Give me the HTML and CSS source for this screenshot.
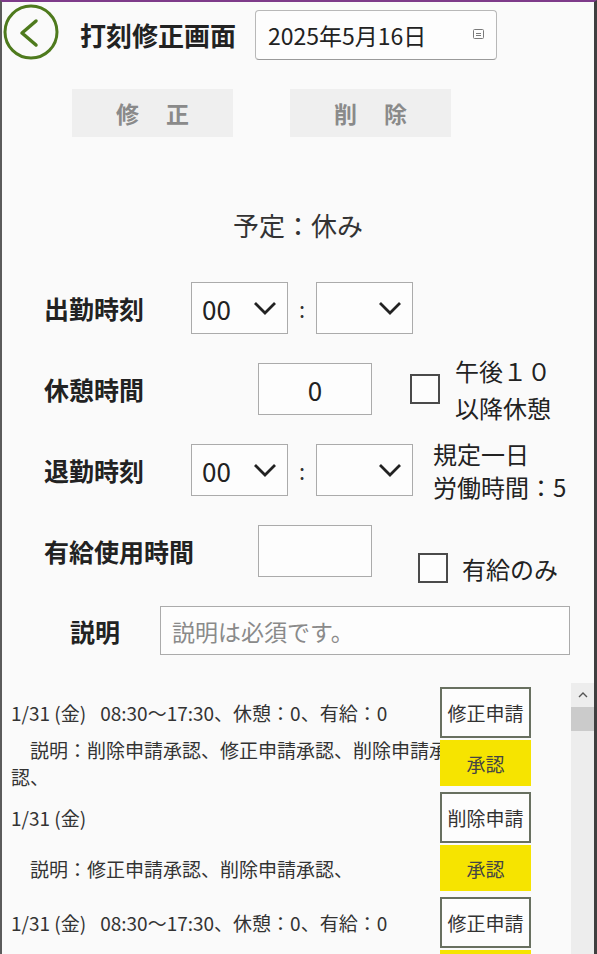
FILE: index.html
```html
<!DOCTYPE html>
<html lang="ja">
<head>
<meta charset="utf-8">
<title>打刻修正画面</title>
<link rel="stylesheet" href="styles.css">
</head>
<body>
<div class="window">
  <header class="header">
    <button class="back" aria-label="戻る">
      <svg width="56" height="56" viewBox="0 0 56 56"><circle cx="28" cy="28" r="26" fill="none" stroke="#4e7a1d" stroke-width="3"/><polyline points="33,17 19,29 33,41" fill="none" stroke="#4e7a1d" stroke-width="3.5" stroke-linecap="round" stroke-linejoin="round"/></svg>
    </button>
    <h1 class="title">打刻修正画面</h1>
    <div class="date-input">
      <span class="date-text">2025年5月16日</span>
      <svg class="cal" width="11" height="10" viewBox="0 0 11 10"><rect x="0.5" y="0.5" width="10" height="9" rx="1" fill="none" stroke="#7a7a7a"/><line x1="3" y1="4.5" x2="8" y2="4.5" stroke="#7a7a7a"/><line x1="3" y1="6.5" x2="8" y2="6.5" stroke="#7a7a7a"/></svg>
    </div>
  </header>

  <div class="actions">
    <button class="act">修正</button>
    <button class="act">削除</button>
  </div>

  <p class="plan">予定：休み</p>

  <div class="form">
    <div class="row">
      <span class="label">出勤時刻</span>
      <div class="select"><span class="sel-val">00</span><svg class="chev" width="24" height="14" viewBox="0 0 24 14"><polyline points="2,2 12,12 22,2" fill="none" stroke="#222" stroke-width="2.8"/></svg></div>
      <span class="colon">:</span>
      <div class="select"><span class="sel-val"></span><svg class="chev" width="24" height="14" viewBox="0 0 24 14"><polyline points="2,2 12,12 22,2" fill="none" stroke="#222" stroke-width="2.8"/></svg></div>
    </div>
    <div class="row">
      <span class="label">休憩時間</span>
      <div class="num">0</div>
      <span class="check check-break"></span>
      <span class="note note-break">午後１０<br>以降休憩</span>
    </div>
    <div class="row">
      <span class="label">退勤時刻</span>
      <div class="select"><span class="sel-val">00</span><svg class="chev" width="24" height="14" viewBox="0 0 24 14"><polyline points="2,2 12,12 22,2" fill="none" stroke="#222" stroke-width="2.8"/></svg></div>
      <span class="colon">:</span>
      <div class="select"><span class="sel-val"></span><svg class="chev" width="24" height="14" viewBox="0 0 24 14"><polyline points="2,2 12,12 22,2" fill="none" stroke="#222" stroke-width="2.8"/></svg></div>
      <span class="note note-rule">規定一日<br>労働時間：5</span>
    </div>
    <div class="row">
      <span class="label">有給使用時間</span>
      <div class="num"></div>
      <div class="paid-only">
        <span class="check"></span>
        <span class="note">有給のみ</span>
      </div>
    </div>
    <div class="row row-desc">
      <span class="label label-desc">説明</span>
      <div class="desc-input">説明は必須です。</div>
    </div>
  </div>

  <div class="list-wrap">
    <div class="list">
      <div class="rec">
        <div class="l1"><span>1/31 (金)</span><span class="sum">08:30～17:30、休憩：0、有給：0</span></div>
        <div class="box">修正申請</div>
        <div class="desc">　説明：削除申請承認、修正申請承認、削除申請承認、</div>
        <div class="ok">承認</div>
      </div>
      <div class="rec">
        <div class="l1"><span>1/31 (金)</span></div>
        <div class="box">削除申請</div>
        <div class="desc">　説明：修正申請承認、削除申請承認、</div>
        <div class="ok">承認</div>
      </div>
      <div class="rec">
        <div class="l1"><span>1/31 (金)</span><span class="sum">08:30～17:30、休憩：0、有給：0</span></div>
        <div class="box">修正申請</div>
        <div class="desc"></div>
        <div class="ok"></div>
      </div>
    </div>
    <div class="scrollbar">
      <div class="sb-arrow"><svg width="10" height="6" viewBox="0 0 10 6"><polyline points="1,5 5,1 9,5" fill="none" stroke="#555" stroke-width="1.4"/></svg></div>
      <div class="sb-thumb"></div>
    </div>
  </div>
</div>
</body>
</html>
```
FILE: styles.css
```css
* { box-sizing: border-box; }
html, body { margin: 0; padding: 0; }
body {
  font-family: "Noto Sans CJK JP", "Noto Sans", sans-serif;
  color: #222;
  background: #fafafa;
}
.window {
  width: 597px;
  height: 954px;
  border-top: 2px solid #7e3b8a;
  border-left: 2px solid #5b5b5b;
  border-right: 3px solid #3f3f3f;
  background: #fafafa;
  display: flex;
  flex-direction: column;
  overflow: hidden;
}

/* header */
.header {
  display: flex;
  align-items: flex-start;
  height: 58px;
  flex: none;
}
.back {
  width: 56px;
  height: 56px;
  margin: 2px 0 0 1px;
  padding: 0;
  border: none;
  background: none;
}
.back svg { display: block; }
.title {
  margin: 14px 0 0 21px;
  font-size: 26px;
  font-weight: 700;
  line-height: 38px;
  color: #222;
  white-space: nowrap;
}
.date-input {
  margin: 8px 0 0 19px;
  width: 242px;
  height: 50px;
  border: 1px solid #b8b8b8;
  border-bottom-color: #9a9a9a;
  border-radius: 4px;
  background: #fdfdfd;
  display: flex;
  align-items: center;
  justify-content: space-between;
  padding: 0 12px 0 12px;
}
.date-text { font-size: 23px; color: #222; }
.cal { display: block; margin-top: -2px; }

/* action buttons */
.actions {
  display: flex;
  gap: 57px;
  margin: 29px 0 0 70px;
  flex: none;
}
.act {
  width: 161px;
  height: 48px;
  border: none;
  background: #efefef;
  color: #8a8a8a;
  font-family: inherit;
  font-size: 23px;
  font-weight: 700;
  letter-spacing: 27px;
  text-indent: 27px;
  padding: 0;
}

.plan {
  margin: 71px 0 0;
  text-align: center;
  font-size: 26px;
  line-height: 34px;
  color: #333;
  flex: none;
}

/* form */
.form {
  margin: 40px 0 0 42px;
  display: flex;
  flex-direction: column;
  gap: 29px;
  flex: none;
}
.row {
  display: flex;
  align-items: center;
  height: 52px;
}
.label {
  width: 147px;
  flex: none;
  font-size: 25px;
  font-weight: 700;
  color: #222;
  white-space: nowrap;
}
.select {
  width: 97px;
  height: 52px;
  border: 1px solid #ababab;
  background: #fdfdfd;
  display: flex;
  align-items: center;
  justify-content: space-between;
  padding: 0 10px 0 10px;
  flex: none;
}
.sel-val { font-size: 26px; color: #222; }
.chev { display: block; }
.colon {
  width: 28px;
  text-align: center;
  font-size: 22px;
  color: #333;
}
.num {
  margin-left: 67px;
  width: 114px;
  height: 52px;
  border: 1px solid #ababab;
  background: #fdfdfd;
  display: flex;
  align-items: center;
  justify-content: center;
  font-size: 26px;
  color: #222;
  flex: none;
}
.check {
  width: 30px;
  height: 30px;
  border: 2px solid #4a4a4a;
  background: #fdfdfd;
  flex: none;
}
.check-break { margin-left: 38px; }
.note {
  font-size: 24px;
  color: #222;
  white-space: nowrap;
}
.note-break { margin-left: 15px; line-height: 37px; }
.note-rule { margin-left: 20px; line-height: 33px; }
.paid-only {
  display: flex;
  align-items: center;
  gap: 14px;
  margin: 34px 0 0 46px;
}
.row-desc { height: 49px; }
.label-desc { width: 116px; padding-left: 26px; }
.desc-input {
  width: 410px;
  height: 49px;
  border: 1px solid #ababab;
  background: #fdfdfd;
  display: flex;
  align-items: center;
  padding-left: 11px;
  font-size: 23px;
  color: #8a8a8a;
}

/* list */
.list-wrap {
  margin-top: 28px;
  flex: 1;
  min-height: 0;
  display: flex;
}
.list {
  flex: 1;
  padding: 4px 0 0 9px;
  overflow: hidden;
  font-size: 19px;
  color: #333;
}
.rec {
  display: grid;
  grid-template-columns: 429px 20px 71px;
  grid-template-rows: 51px 46px;
  row-gap: 2px;
  align-items: center;
  margin-bottom: 6px;
}
.l1 {
  grid-column: 1 / 3;
  grid-row: 1;
  white-space: nowrap;
  line-height: 27px;
}
.sum { margin-left: 14px; }
.box {
  grid-column: 2 / 4;
  grid-row: 1;
  height: 51px;
  border: 2px solid #687060;
  background: #fdfdfd;
  display: flex;
  align-items: center;
  justify-content: center;
  color: #333;
}
.desc {
  grid-column: 1 / 3;
  grid-row: 2;
  line-height: 27px;
}
.ok {
  grid-column: 2 / 4;
  grid-row: 2;
  height: 46px;
  background: #f6e400;
  display: flex;
  align-items: center;
  justify-content: center;
  color: #444;
}
.scrollbar {
  width: 23px;
  flex: none;
  background: #ededed;
}
.sb-arrow {
  height: 23px;
  display: flex;
  align-items: center;
  justify-content: center;
}
.sb-arrow svg { display: block; }
.sb-thumb {
  height: 24px;
  margin-top: 1px;
  background: #cbcbcb;
}
```
